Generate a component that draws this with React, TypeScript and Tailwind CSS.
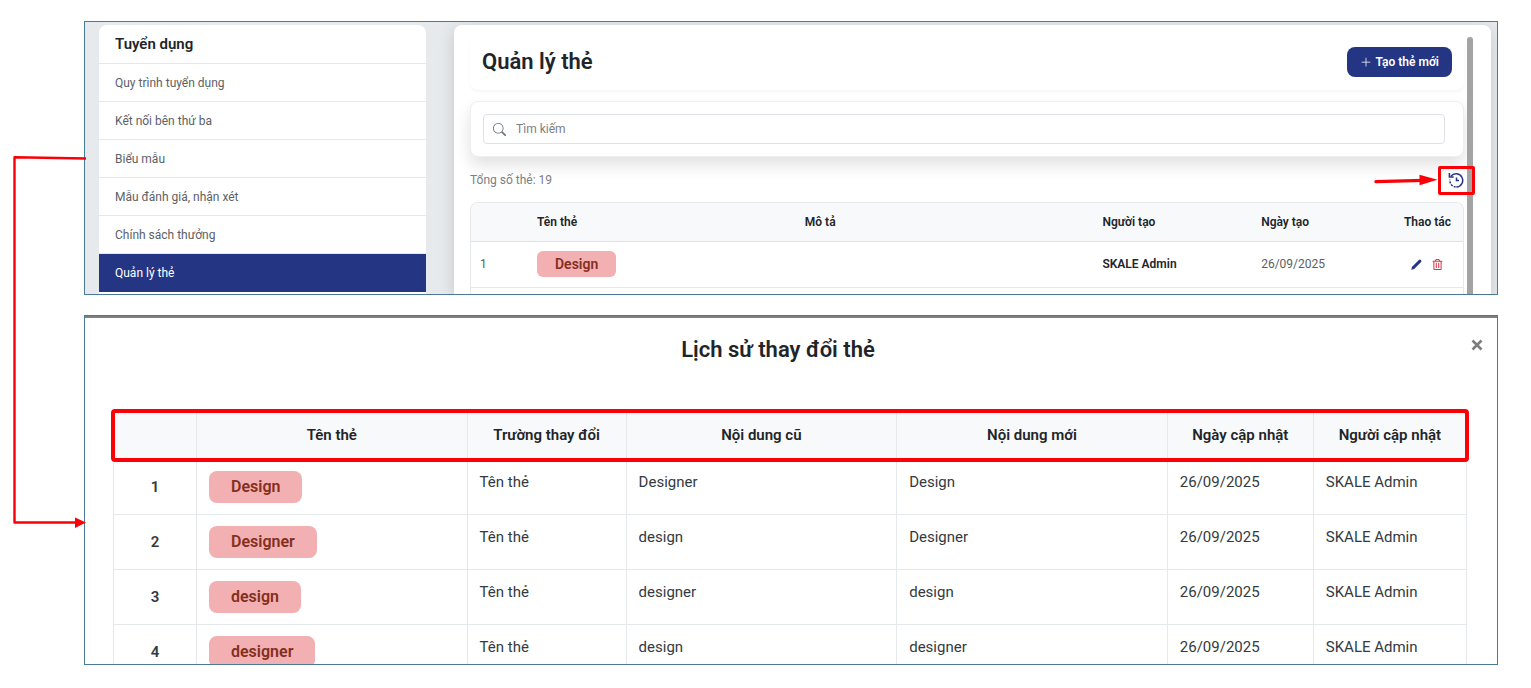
import { BsPlusLg, BsSearch } from "react-icons/bs";
import { FaRegTrashAlt } from "react-icons/fa";

const MENU_ITEMS = [
  "Quy trình tuyển dụng",
  "Kết nối bên thứ ba",
  "Biểu mẫu",
  "Mẫu đánh giá, nhận xét",
  "Chính sách thưởng",
  "Quản lý thẻ",
];

const HISTORY = [
  { tag: "Design", field: "Tên thẻ", before: "Designer", after: "Design", date: "26/09/2025", user: "SKALE Admin" },
  { tag: "Designer", field: "Tên thẻ", before: "design", after: "Designer", date: "26/09/2025", user: "SKALE Admin" },
  { tag: "design", field: "Tên thẻ", before: "designer", after: "design", date: "26/09/2025", user: "SKALE Admin" },
  { tag: "designer", field: "Tên thẻ", before: "design", after: "designer", date: "26/09/2025", user: "SKALE Admin" },
];

export default function App() {
  return (
    <main className="relative flex flex-col gap-5 bg-white pt-[21px] pr-[33px] pb-6 pl-[84px] font-['Roboto',sans-serif] text-[#212529]">
      <TagManagement />
      <HistoryDialog />
      <Connector />
    </main>
  );
}

function TagManagement() {
  return (
    <section className="flex max-h-[274px] overflow-hidden border border-[#4b7a96] bg-[#e6eaed] pt-[3px] pr-1.5 pl-3.5">
      <Sidebar />
      <div className="relative ml-7 flex-1 rounded-t-lg bg-white pt-3 pr-[27px] pl-4 shadow-[0_4px_16px_rgba(0,0,0,0.15)]">
        {/* Page title */}
        <header className="flex h-[53px] items-center justify-between rounded-lg px-3 pb-1 shadow-[0_2px_3px_rgba(0,0,0,0.04)]">
          <h1 className="text-[22px] font-semibold">Quản lý thẻ</h1>
          <button className="flex h-[30px] items-center gap-1 rounded-lg bg-[#243584] px-[13px] text-xs font-semibold text-white">
            <BsPlusLg size={12} /> Tạo thẻ mới
          </button>
        </header>

        {/* Search */}
        <div className="mt-[11px] rounded-lg border border-[#edeff0] bg-white py-3 pr-[18px] pl-3 shadow-[0_8px_16px_rgba(0,0,0,0.12)]">
          <label className="flex h-[30px] items-center gap-2.5 rounded border border-[#dee2e6] px-[9px]">
            <BsSearch size={13} className="text-[#6c757d]" />
            <input
              type="text"
              aria-label="Tìm kiếm"
              placeholder="Tìm kiếm"
              className="flex-1 bg-transparent text-xs outline-none placeholder:text-[#7b8085]"
            />
          </label>
        </div>

        <div className="flex h-[45px] items-center justify-between">
          <span className="text-xs text-[#7b8085]">Tổng số thẻ: 19</span>
          <div className="relative z-10">
            <button aria-label="Lịch sử" className="block text-[#243584]">
              <HistoryIcon />
            </button>
            <HistoryMarker />
          </div>
        </div>

        {/* Tag list */}
        <div className="overflow-hidden rounded-t-lg border border-b-0 border-[#e6e9ec]">
          <table className="w-full table-fixed text-left text-xs">
            <thead>
              <tr className="h-[38px] border-b border-[#dee2e6] bg-[#f8f9fb]">
                <th className="w-[57px]" />
                <th className="w-[27%] px-[9px] font-semibold">Tên thẻ</th>
                <th className="w-[30%] px-[9px] font-semibold">Mô tả</th>
                <th className="w-[16%] px-[9px] font-semibold">Người tạo</th>
                <th className="w-[14%] px-[9px] font-semibold">Ngày tạo</th>
                <th className="pr-3 text-right font-semibold">Thao tác</th>
              </tr>
            </thead>
            <tbody>
              <tr className="h-[46px] border-b border-[#e6e9ec]">
                <td className="px-[9px] text-[#5c6166]">1</td>
                <td className="px-[9px]">
                  <span className="flex h-[26px] w-fit items-center rounded-md bg-[#f2b0b3] px-[18px] text-sm font-semibold text-[#842f1c]">
                    Design
                  </span>
                </td>
                <td />
                <td className="px-[9px] font-semibold">SKALE Admin</td>
                <td className="px-[9px] text-[#5c6166]">26/09/2025</td>
                <td>
                  <div className="flex items-center justify-end gap-2.5 pr-5">
                    <button aria-label="Sửa" className="text-[#243584]">
                      <PencilIcon />
                    </button>
                    <button aria-label="Xóa" className="text-[#dc3545]">
                      <FaRegTrashAlt size={11} />
                    </button>
                  </div>
                </td>
              </tr>
              <tr className="h-[46px]">
                <td colSpan={6} />
              </tr>
            </tbody>
          </table>
        </div>

        {/* Scrollbar */}
        <div className="absolute top-3 right-[18px] bottom-0 w-1.5 rounded-t-full bg-[#a3a3a3]" />
      </div>
    </section>
  );
}

function Sidebar() {
  return (
    <nav className="w-[327px] rounded-t-lg bg-white">
      <h2 className="flex h-[39px] items-center border-b border-[#e6e9ec] px-4 text-[15px] font-semibold">Tuyển dụng</h2>
      <ul className="text-xs">
        {MENU_ITEMS.map((item) => (
          <li key={item}>
            <a
              href="#"
              aria-current={item === "Quản lý thẻ" ? "page" : undefined}
              className="flex h-[38px] items-center border-b border-[#e6e9ec] px-4 text-[#5c6166] aria-[current=page]:border-[#243584] aria-[current=page]:bg-[#243584] aria-[current=page]:text-white"
            >
              {item}
            </a>
          </li>
        ))}
      </ul>
    </nav>
  );
}

function HistoryDialog() {
  return (
    <section className="max-h-[350px] overflow-hidden border border-[#4b7a96] bg-white">
      <div className="h-0.5 bg-[#808080]" />
      <header className="flex h-[92px] items-start pt-[14px] pr-3.5">
        <h2 className="flex-1 text-center text-[22px] leading-9 font-semibold">Lịch sử thay đổi thẻ</h2>
        <button aria-label="Đóng" className="mt-[7px] text-[#7d7d7d]">
          <CloseIcon />
        </button>
      </header>

      <div className="relative mr-[30px] ml-7">
        <table className="w-full table-fixed border-collapse text-[15px] text-[#343a40]">
          <thead className="text-[#212529]">
            <tr className="h-[49px] bg-[#f8f9fb]">
              <th className="w-[83px] border border-[#e6e9ec]" />
              <th className="w-[20%] border border-[#e6e9ec] font-semibold">Tên thẻ</th>
              <th className="w-[159px] border border-[#e6e9ec] font-semibold">Trường thay đổi</th>
              <th className="w-[20%] border border-[#e6e9ec] font-semibold">Nội dung cũ</th>
              <th className="w-[20%] border border-[#e6e9ec] font-semibold">Nội dung mới</th>
              <th className="w-[146px] border border-[#e6e9ec] font-semibold">Ngày cập nhật</th>
              <th className="border border-[#e6e9ec] font-semibold">Người cập nhật</th>
            </tr>
          </thead>
          <tbody>
            {HISTORY.map((row, i) => (
              <tr key={i} className="h-[55px] align-top">
                <td className="border border-[#e6e9ec] text-center align-middle font-semibold">{i + 1}</td>
                <td className="border border-[#e6e9ec] px-3 align-middle">
                  <span className="flex h-8 w-fit items-center rounded-lg bg-[#f2b0b3] px-[22px] text-base font-semibold text-[#842f1c]">
                    {row.tag}
                  </span>
                </td>
                <td className="border border-[#e6e9ec] px-3 pt-[11px]">{row.field}</td>
                <td className="border border-[#e6e9ec] px-3 pt-[11px]">{row.before}</td>
                <td className="border border-[#e6e9ec] px-3 pt-[11px]">{row.after}</td>
                <td className="border border-[#e6e9ec] px-3 pt-[11px]">{row.date}</td>
                <td className="border border-[#e6e9ec] px-3 pt-[11px]">{row.user}</td>
              </tr>
            ))}
          </tbody>
        </table>
        {/* Header highlight */}
        <div className="pointer-events-none absolute -inset-x-0.5 -top-px h-[53px] rounded-sm border-4 border-[#fb0007]" />
      </div>
    </section>
  );
}

function HistoryIcon() {
  return (
    <svg width="16" height="16" viewBox="0 0 16 16" fill="none" stroke="currentColor" strokeWidth="1.5">
      <path d="M3 4.2A6.6 6.6 0 1 1 8.3 15" />
      <path d="M7.6 15A6.6 6.6 0 0 1 1.9 7.6" strokeDasharray="2 1.2" />
      <path d="M1.4 1V5H5.6" />
      <path d="M8.5 5.4V8.6H11" />
    </svg>
  );
}

function PencilIcon() {
  return (
    <svg width="11" height="11" viewBox="0 0 11 11" fill="currentColor">
      <path d="M0.3 10.7L0.9 7.9L7.9 0.9Q8.7 0.1 9.5 0.8L10.2 1.5Q10.9 2.3 10.1 3.1L3.1 10.1Z" />
    </svg>
  );
}

function CloseIcon() {
  return (
    <svg width="12" height="12" viewBox="0 0 12 12" fill="none" stroke="currentColor" strokeWidth="2.6">
      <path d="M1.5 1.5L10.5 10.5M10.5 1.5L1.5 10.5" />
    </svg>
  );
}

// Red box and arrow pointing at the history button
function HistoryMarker() {
  return (
    <div className="pointer-events-none absolute -top-1.5 -right-[11px] flex w-[101px] items-center">
      <svg width="64" height="12" viewBox="0 0 64 12" fill="#fb0007">
        <path d="M2 7.6L50 6.4" stroke="#fb0007" strokeWidth="3.4" strokeLinecap="round" />
        <path d="M45.5 0.8L63.5 5.8L45.5 11.2Z" />
      </svg>
      <div className="h-[29px] w-[37px] rounded-xs border-[3px] border-[#fb0007]" />
    </div>
  );
}

// Line from the tag page down to the history dialog
function Connector() {
  return (
    <svg className="pointer-events-none absolute top-[155px] left-3" width="75" height="376" viewBox="0 0 75 376" fill="none">
      <path d="M74 3.5L2.5 2.2V367.5H66" stroke="#fb0007" strokeWidth="2.4" strokeLinejoin="round" />
      <path d="M63 362.5L74 367.5L63 373Z" fill="#fb0007" />
    </svg>
  );
}
